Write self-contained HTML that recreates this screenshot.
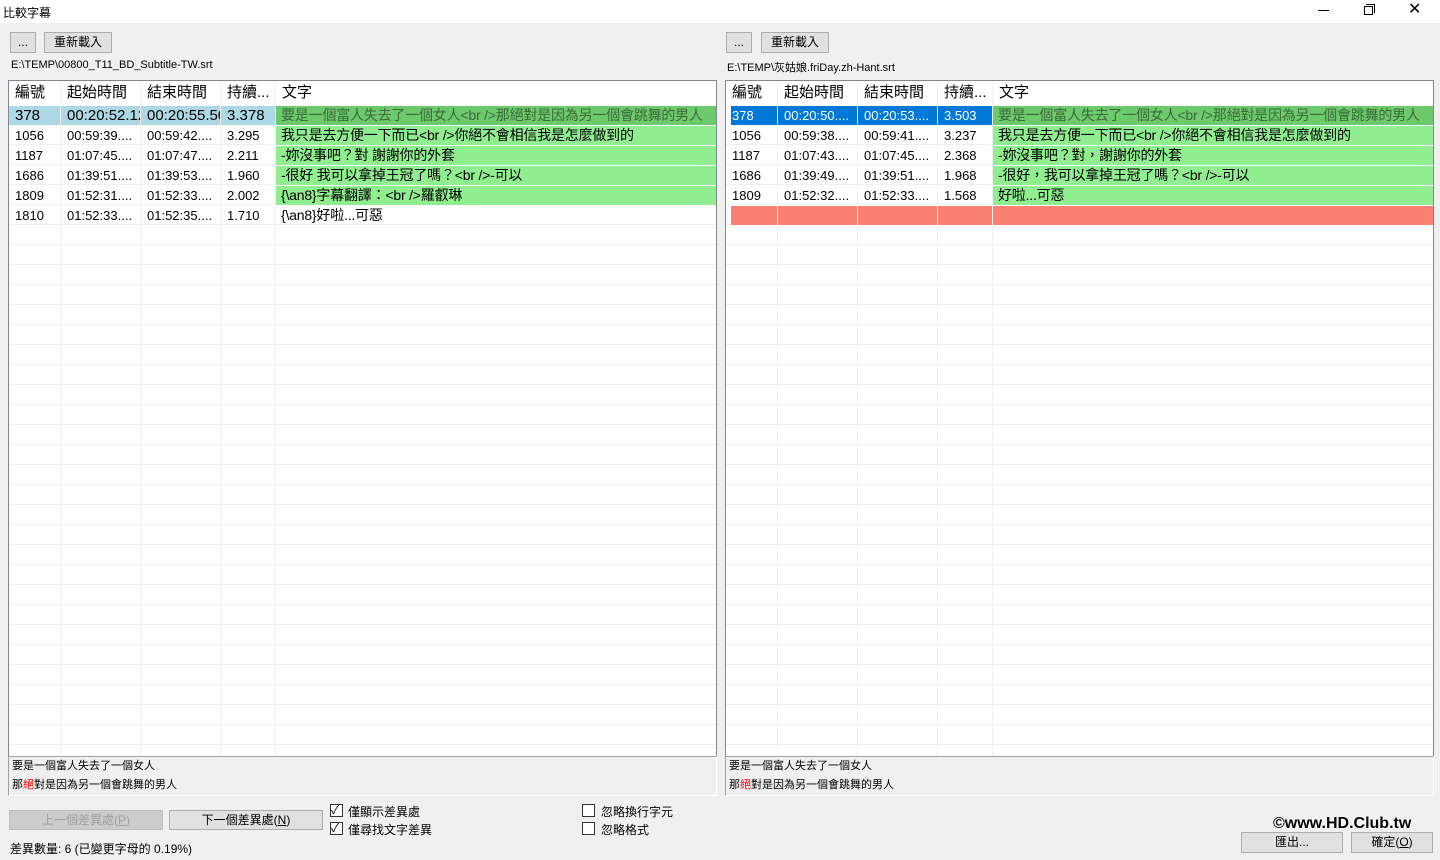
<!DOCTYPE html>
<html><head><meta charset="utf-8"><style>
*{box-sizing:border-box;margin:0;padding:0}
body{width:1440px;height:860px;background:#f0f0f0;position:relative;overflow:hidden;font-family:"Liberation Sans","Noto Sans CJK TC",sans-serif;font-size:12px;color:#000}
.a{position:absolute;white-space:nowrap}
.btn{position:absolute;background:#e1e1e1;border:1px solid #adadad;text-align:center;font-size:12px;line-height:18px}
.list{position:absolute;top:80px;width:709px;height:677px;background:#fff;border:1px solid #828790;overflow:hidden;
background-image:repeating-linear-gradient(to bottom,transparent 0,transparent 19px,#f0f0f0 19px,#f0f0f0 20px);background-position:0 24px}
.vl{position:absolute;top:0;bottom:0;width:1px;background:#f0f0f0}
.hd{position:absolute;top:0;height:24px;background:#fff;font-size:15px;line-height:24px;padding-left:6px}
.c{position:absolute;height:19px;line-height:19px;font-size:13px;padding-left:6px;overflow:hidden;white-space:nowrap}
.t{font-size:14px;padding-left:5px;letter-spacing:-0.2px}
.g{background:#90ee90}
.sel{background:#add8e6}
.blue{background:#0078d7;color:#fff}
.red{background:#fa8072}
.box{position:absolute;top:756px;width:709px;height:40px;border:1px solid #a0a0a0;border-right-color:#fff;border-bottom-color:#fff;background:#f0f0f0;font-size:11px;line-height:19px;padding-left:3px}
.cb{position:absolute;width:13px;height:13px;border:1px solid #333;background:#fff}
</style></head><body>
<div class="a" style="left:0;top:0;width:1440px;height:23px;background:#fff"></div>
<div class="a" style="left:3px;top:4px;font-size:12px">比較字幕</div>
<div class="a" style="left:1318px;top:10px;width:11px;height:1px;background:#000"></div>
<div class="a" style="left:1364px;top:6px;width:9px;height:9px;border:1px solid #000;background:#fff"></div>
<div class="a" style="left:1366px;top:4px;width:9px;height:9px;border-top:1px solid #000;border-right:1px solid #000"></div>
<div class="a" style="left:1408px;top:0px;font-size:16px;line-height:20px">✕</div>

<div class="btn" style="left:10px;top:32px;width:26px;height:21px">...</div>
<div class="btn" style="left:44px;top:32px;width:68px;height:21px">重新載入</div>
<div class="a" style="left:11px;top:59px;font-size:11px">E:\TEMP\00800_T11_BD_Subtitle-TW.srt</div>
<div class="btn" style="left:726px;top:32px;width:26px;height:21px">...</div>
<div class="btn" style="left:761px;top:32px;width:68px;height:21px">重新載入</div>
<div class="a" style="left:727px;top:59px;font-size:11px">E:\TEMP\灰姑娘.friDay.zh-Hant.srt</div>

<div class="list" style="left:8px">
<div class="vl" style="left:51px"></div><div class="vl" style="left:131px"></div><div class="vl" style="left:211px"></div><div class="vl" style="left:266px"></div>
<div class="hd" style="left:0;width:51px">編號</div><div class="hd" style="left:52px;width:79px">起始時間</div><div class="hd" style="left:132px;width:79px">結束時間</div><div class="hd" style="left:212px;width:54px">持續...</div><div class="hd" style="left:267px;width:440px">文字</div>
<div class="c sel" style="top:25px;left:0;width:51px;font-size:15px">378</div><div class="c sel" style="top:25px;left:52px;width:79px;font-size:15px">00:20:52.12</div><div class="c sel" style="top:25px;left:132px;width:79px;font-size:15px">00:20:55.50</div><div class="c sel" style="top:25px;left:212px;width:54px;font-size:15px">3.378</div><div class="c t" style="top:25px;left:267px;width:441px;background:#6cc96c;color:#3a6a3a">要是一個富人失去了一個女人&lt;br /&gt;那絕對是因為另一個會跳舞的男人</div>
<div class="c" style="top:45px;left:0">1056</div><div class="c" style="top:45px;left:52px">00:59:39....</div><div class="c" style="top:45px;left:132px">00:59:42....</div><div class="c" style="top:45px;left:212px">3.295</div><div class="c t g" style="top:45px;left:267px;width:441px">我只是去方便一下而已&lt;br /&gt;你絕不會相信我是怎麼做到的</div>
<div class="c" style="top:65px;left:0">1187</div><div class="c" style="top:65px;left:52px">01:07:45....</div><div class="c" style="top:65px;left:132px">01:07:47....</div><div class="c" style="top:65px;left:212px">2.211</div><div class="c t g" style="top:65px;left:267px;width:441px">-妳沒事吧？對 謝謝你的外套</div>
<div class="c" style="top:85px;left:0">1686</div><div class="c" style="top:85px;left:52px">01:39:51....</div><div class="c" style="top:85px;left:132px">01:39:53....</div><div class="c" style="top:85px;left:212px">1.960</div><div class="c t g" style="top:85px;left:267px;width:441px">-很好 我可以拿掉王冠了嗎？&lt;br /&gt;-可以</div>
<div class="c" style="top:105px;left:0">1809</div><div class="c" style="top:105px;left:52px">01:52:31....</div><div class="c" style="top:105px;left:132px">01:52:33....</div><div class="c" style="top:105px;left:212px">2.002</div><div class="c t g" style="top:105px;left:267px;width:441px">{\an8}字幕翻譯：&lt;br /&gt;羅叡琳</div>
<div class="c" style="top:125px;left:0">1810</div><div class="c" style="top:125px;left:52px">01:52:33....</div><div class="c" style="top:125px;left:132px">01:52:35....</div><div class="c" style="top:125px;left:212px">1.710</div><div class="c t" style="top:125px;left:267px;width:441px">{\an8}好啦...可惡</div>
</div>

<div class="list" style="left:725px">
<div class="vl" style="left:51px"></div><div class="vl" style="left:131px"></div><div class="vl" style="left:211px"></div><div class="vl" style="left:266px"></div>
<div class="hd" style="left:0;width:51px">編號</div><div class="hd" style="left:52px;width:79px">起始時間</div><div class="hd" style="left:132px;width:79px">結束時間</div><div class="hd" style="left:212px;width:54px">持續...</div><div class="hd" style="left:267px;width:440px">文字</div>
<div class="c blue" style="top:25px;left:5px;width:46px;padding-left:1px">378</div><div class="c blue" style="top:25px;left:52px;width:79px">00:20:50....</div><div class="c blue" style="top:25px;left:132px;width:79px">00:20:53....</div><div class="c blue" style="top:25px;left:212px;width:54px">3.503</div><div class="c t" style="top:25px;left:267px;width:441px;background:#6cc96c;color:#3a6a3a">要是一個富人失去了一個女人&lt;br /&gt;那絕對是因為另一個會跳舞的男人</div>
<div class="c" style="top:45px;left:0">1056</div><div class="c" style="top:45px;left:52px">00:59:38....</div><div class="c" style="top:45px;left:132px">00:59:41....</div><div class="c" style="top:45px;left:212px">3.237</div><div class="c t g" style="top:45px;left:267px;width:441px">我只是去方便一下而已&lt;br /&gt;你絕不會相信我是怎麼做到的</div>
<div class="c" style="top:65px;left:0">1187</div><div class="c" style="top:65px;left:52px">01:07:43....</div><div class="c" style="top:65px;left:132px">01:07:45....</div><div class="c" style="top:65px;left:212px">2.368</div><div class="c t g" style="top:65px;left:267px;width:441px">-妳沒事吧？對，謝謝你的外套</div>
<div class="c" style="top:85px;left:0">1686</div><div class="c" style="top:85px;left:52px">01:39:49....</div><div class="c" style="top:85px;left:132px">01:39:51....</div><div class="c" style="top:85px;left:212px">1.968</div><div class="c t g" style="top:85px;left:267px;width:441px">-很好，我可以拿掉王冠了嗎？&lt;br /&gt;-可以</div>
<div class="c" style="top:105px;left:0">1809</div><div class="c" style="top:105px;left:52px">01:52:32....</div><div class="c" style="top:105px;left:132px">01:52:33....</div><div class="c" style="top:105px;left:212px">1.568</div><div class="c t g" style="top:105px;left:267px;width:441px">好啦...可惡</div>
<div class="c red" style="top:125px;left:5px;width:46px"></div><div class="c red" style="top:125px;left:52px;width:79px"></div><div class="c red" style="top:125px;left:132px;width:79px"></div><div class="c red" style="top:125px;left:212px;width:54px"></div><div class="c red" style="top:125px;left:267px;width:441px"></div>
</div>

<div class="box" style="left:8px">要是一個富人失去了一個女人<br>那<span style="color:#e00">絕</span>對是因為另一個會跳舞的男人</div>
<div class="box" style="left:725px">要是一個富人失去了一個女人<br>那<span style="color:#e00">絕</span>對是因為另一個會跳舞的男人</div>

<div class="btn" style="left:9px;top:810px;width:154px;height:20px;background:#ccc;border-color:#bfbfbf;color:#a0a0a0">上一個差異處(<u>P</u>)</div>
<div class="btn" style="left:169px;top:810px;width:154px;height:20px">下一個差異處(<u>N</u>)</div>
<div class="cb" style="left:330px;top:804px"></div><div class="a" style="left:331px;top:801px;font-size:12px">✓</div><div class="a" style="left:348px;top:803px">僅顯示差異處</div>
<div class="cb" style="left:330px;top:822px"></div><div class="a" style="left:331px;top:819px;font-size:12px">✓</div><div class="a" style="left:348px;top:821px">僅尋找文字差異</div>
<div class="cb" style="left:582px;top:804px"></div><div class="a" style="left:601px;top:803px">忽略換行字元</div>
<div class="cb" style="left:582px;top:822px"></div><div class="a" style="left:601px;top:821px">忽略格式</div>
<div class="a" style="left:10px;top:840px;font-size:12px">差異數量: 6 (已變更字母的 0.19%)</div>

<div class="a" style="left:1273px;top:815px;font-size:16px;font-weight:bold;color:#000;text-shadow:0 0 2px #fff,0 0 2px #fff">©www.HD.Club.tw</div>
<div class="btn" style="left:1241px;top:832px;width:102px;height:21px">匯出...</div>
<div class="btn" style="left:1351px;top:832px;width:82px;height:21px">確定(<u>O</u>)</div>
</body></html>
